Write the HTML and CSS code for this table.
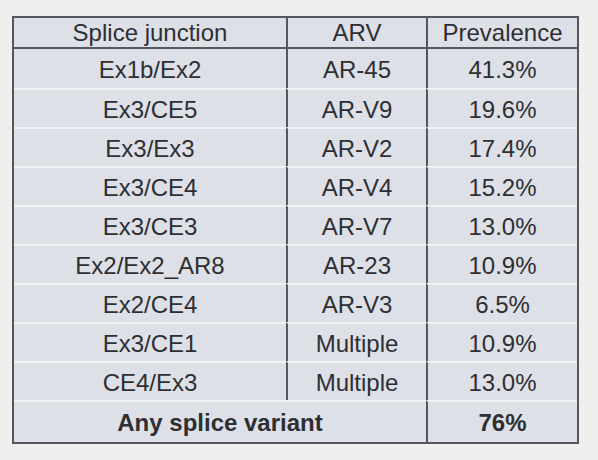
FILE: index.html
```html
<!DOCTYPE html>
<html lang="en">
<head>
    <meta charset="UTF-8">
    <title>AR splice variants</title>
    <link rel="stylesheet" href="styles.css">
</head>
<body>
    <table class="variants">
        <thead>
            <tr>
                <th>Splice junction</th>
                <th class="col-arv">ARV</th>
                <th class="col-prev">Prevalence</th>
            </tr>
        </thead>
        <tbody>
            <tr class="first">
                <td>Ex1b/Ex2</td>
                <td class="col-arv">AR-45</td>
                <td class="col-prev">41.3%</td>
            </tr>
            <tr>
                <td>Ex3/CE5</td>
                <td class="col-arv">AR-V9</td>
                <td class="col-prev">19.6%</td>
            </tr>
            <tr>
                <td>Ex3/Ex3</td>
                <td class="col-arv">AR-V2</td>
                <td class="col-prev">17.4%</td>
            </tr>
            <tr>
                <td>Ex3/CE4</td>
                <td class="col-arv">AR-V4</td>
                <td class="col-prev">15.2%</td>
            </tr>
            <tr>
                <td>Ex3/CE3</td>
                <td class="col-arv">AR-V7</td>
                <td class="col-prev">13.0%</td>
            </tr>
            <tr>
                <td>Ex2/Ex2_AR8</td>
                <td class="col-arv">AR-23</td>
                <td class="col-prev">10.9%</td>
            </tr>
            <tr>
                <td>Ex2/CE4</td>
                <td class="col-arv">AR-V3</td>
                <td class="col-prev">6.5%</td>
            </tr>
            <tr>
                <td>Ex3/CE1</td>
                <td class="col-arv">Multiple</td>
                <td class="col-prev">10.9%</td>
            </tr>
            <tr>
                <td>CE4/Ex3</td>
                <td class="col-arv">Multiple</td>
                <td class="col-prev">13.0%</td>
            </tr>
            <tr class="total">
                <td colspan="2">Any splice variant</td>
                <td class="col-prev">76%</td>
            </tr>
        </tbody>
    </table>
</body>
</html>
```

FILE: styles.css
```css
body {
    margin: 0;
    background: #efefef;
    font-family: "Liberation Sans", Arial, sans-serif;
}

.variants {
    margin: 16px 0 0 12px;
    width: 567px;
    border: 2px solid #54575e;
    border-spacing: 0;
    background: #dde0e7;
    color: #2e2f33;
    font-size: 24px;
    table-layout: fixed;
}

.variants th,
.variants td {
    padding: 0;
    text-align: center;
    vertical-align: middle;
    font-weight: normal;
}

.variants th {
    height: 29px;
    border-bottom: 2px solid #54575e;
}

.variants td {
    height: 35px;
    padding-top: 2px;
    border-top: 2px solid #f1f2f5;
}

/* first data row sits right under the header line */
.variants tr.first td {
    border-top: none;
    height: 37px;
}

.variants th:first-child,
.variants td:first-child {
    width: 272px;
}

.col-arv {
    width: 138px;
    border-left: 2px solid #54575e;
}

.col-prev {
    border-left: 2px solid #54575e;
}

.variants tr.total td {
    font-weight: bold;
    height: 38px;
}
```
